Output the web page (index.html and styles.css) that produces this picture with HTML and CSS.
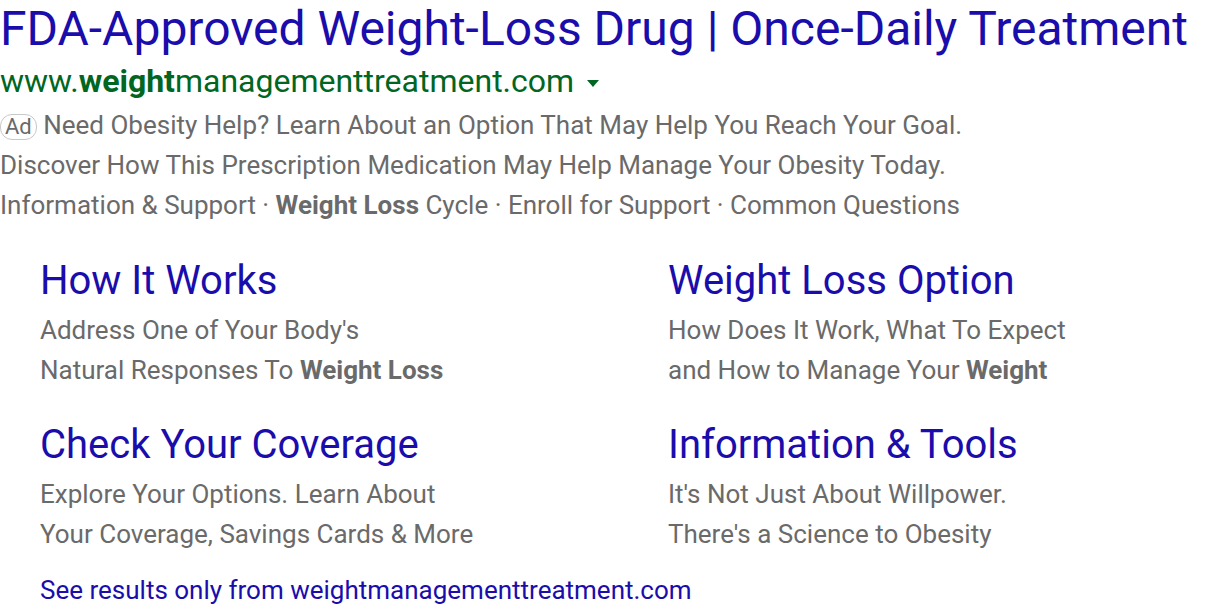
FILE: index.html
```html
<!DOCTYPE html>
<html>
<head>
<meta charset="utf-8">
<link rel="stylesheet" href="styles.css">
</head>
<body>
<div class="ad">
  <a class="title" href="#">FDA-Approved Weight-Loss Drug | Once-Daily Treatment</a>
  <div class="url">www.<b>weight</b>managementtreatment.com <span class="caret"></span></div>
  <div class="desc">
    <div class="line"><span class="badge">Ad</span> Need Obesity Help? Learn About an Option That May Help You Reach Your Goal.</div>
    <div class="line">Discover How This Prescription Medication May Help Manage Your Obesity Today.</div>
    <div class="line">Information &amp; Support · <b>Weight Loss</b> Cycle · Enroll for Support · Common Questions</div>
  </div>
  <div class="sitelinks">
    <div class="sl">
      <a class="sl-title" href="#">How It Works</a>
      <div class="sl-desc">Address One of Your Body's</div>
      <div class="sl-desc">Natural Responses To <b>Weight Loss</b></div>
    </div>
    <div class="sl">
      <a class="sl-title" href="#">Weight Loss Option</a>
      <div class="sl-desc">How Does It Work, What To Expect</div>
      <div class="sl-desc">and How to Manage Your <b>Weight</b></div>
    </div>
    <div class="sl">
      <a class="sl-title" href="#">Check Your Coverage</a>
      <div class="sl-desc">Explore Your Options. Learn About</div>
      <div class="sl-desc">Your Coverage, Savings Cards &amp; More</div>
    </div>
    <div class="sl">
      <a class="sl-title" href="#">Information &amp; Tools</a>
      <div class="sl-desc">It's Not Just About Willpower.</div>
      <div class="sl-desc">There's a Science to Obesity</div>
    </div>
  </div>
  <a class="more" href="#">See results only from weightmanagementtreatment.com</a>
</div>
</body>
</html>
```
FILE: styles.css
```css
html, body {
  margin: 0;
  padding: 0;
  background: #fff;
}
body {
  font-family: Roboto, "Noto Sans", Arial, sans-serif;
}
a { text-decoration: none; }
.ad {
  display: flex;
  flex-direction: column;
  padding-top: 1px;
}
.title {
  color: #1a0dab;
  font-size: 48px;
  line-height: 56px;
  white-space: nowrap;
}
.url {
  color: #006621;
  font-size: 32px;
  line-height: 48px;
}
.url b { font-weight: 700; }
.caret {
  display: inline-block;
  width: 0;
  height: 0;
  border-left: 6px solid transparent;
  border-right: 6px solid transparent;
  border-top: 7px solid #006621;
  vertical-align: middle;
  margin-left: 5px;
}
.desc {
  color: #6a6a6a;
  font-size: 26px;
  line-height: 40px;
}
.desc b, .sl-desc b { font-weight: 700; }
.badge {
  display: inline-block;
  border: 1px solid #c8c8c8;
  border-radius: 12px;
  font-size: 22px;
  line-height: 24px;
  padding: 0 4px;
  color: #6a6a6a;
}
.sitelinks {
  display: grid;
  grid-template-columns: 628px 1fr;
  padding-left: 40px;
  margin-top: 27px;
  row-gap: 26px;
}
.sl { display: flex; flex-direction: column; }
.sl-title {
  color: #1a0dab;
  font-size: 40px;
  line-height: 58px;
}
.sl-desc {
  color: #6a6a6a;
  font-size: 26px;
  line-height: 40px;
}
.more {
  color: #1a0dab;
  font-size: 26px;
  line-height: 40px;
  padding-left: 40px;
  margin-top: 16px;
}
```
